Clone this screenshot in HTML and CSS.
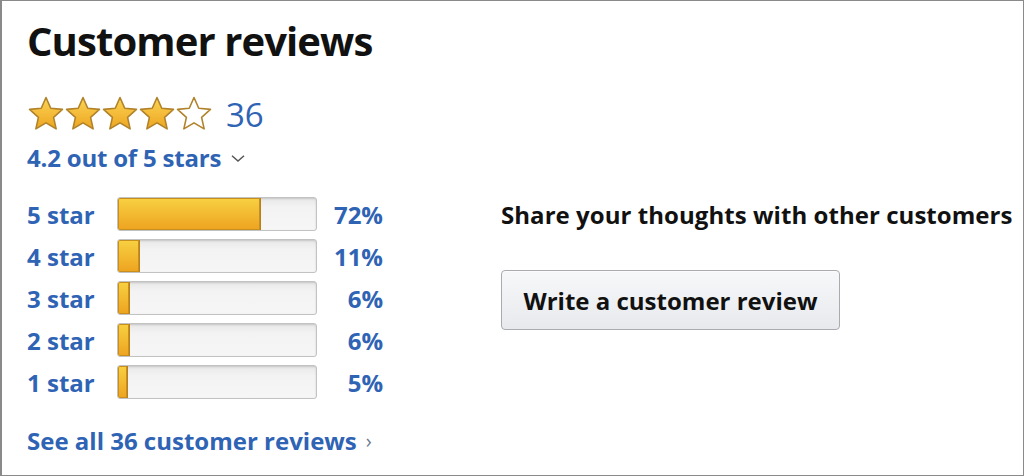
FILE: index.html
```html
<!DOCTYPE html>
<html>
<head>
<meta charset="utf-8">
<link rel="stylesheet" href="styles.css">
</head>
<body>
<div class="frame">
  <div class="left">
    <h1 class="title">Customer reviews</h1>
    <div class="stars-row">
      <div class="stars">
        <svg class="star" viewBox="0 0 24 24"><defs><linearGradient id="g" x1="0" y1="0" x2="0" y2="1"><stop offset="0" stop-color="#fbd454"/><stop offset="1" stop-color="#eda521"/></linearGradient></defs><polygon points="12,1.6 15,8.4 22.4,9.1 16.8,14.1 18.4,21.4 12,17.6 5.6,21.4 7.2,14.1 1.6,9.1 9,8.4" fill="url(#g)" stroke="#b0822a" stroke-width="1" stroke-linejoin="round"/></svg>
        <svg class="star" viewBox="0 0 24 24"><polygon points="12,1.6 15,8.4 22.4,9.1 16.8,14.1 18.4,21.4 12,17.6 5.6,21.4 7.2,14.1 1.6,9.1 9,8.4" fill="url(#g)" stroke="#b0822a" stroke-width="1" stroke-linejoin="round"/></svg>
        <svg class="star" viewBox="0 0 24 24"><polygon points="12,1.6 15,8.4 22.4,9.1 16.8,14.1 18.4,21.4 12,17.6 5.6,21.4 7.2,14.1 1.6,9.1 9,8.4" fill="url(#g)" stroke="#b0822a" stroke-width="1" stroke-linejoin="round"/></svg>
        <svg class="star" viewBox="0 0 24 24"><polygon points="12,1.6 15,8.4 22.4,9.1 16.8,14.1 18.4,21.4 12,17.6 5.6,21.4 7.2,14.1 1.6,9.1 9,8.4" fill="url(#g)" stroke="#b0822a" stroke-width="1" stroke-linejoin="round"/></svg>
        <svg class="star" viewBox="0 0 24 24"><polygon points="12,1.6 15,8.4 22.4,9.1 16.8,14.1 18.4,21.4 12,17.6 5.6,21.4 7.2,14.1 1.6,9.1 9,8.4" fill="#fff" stroke="#b0822a" stroke-width="1" stroke-linejoin="round"/></svg>
      </div>
      <span class="count">36</span>
    </div>
    <div class="avg">4.2 out of 5 stars <svg class="chev" viewBox="0 0 14 7"><polyline points="1,0.8 7,6 13,0.8" fill="none" stroke="#555" stroke-width="1.5"/></svg></div>
    <div class="hist">
      <div class="row"><span class="lbl">5 star</span><div class="bar"><div class="fill" style="width:72%"></div></div><span class="pct">72%</span></div>
      <div class="row"><span class="lbl">4 star</span><div class="bar"><div class="fill" style="width:11%"></div></div><span class="pct">11%</span></div>
      <div class="row"><span class="lbl">3 star</span><div class="bar"><div class="fill" style="width:6%"></div></div><span class="pct">6%</span></div>
      <div class="row"><span class="lbl">2 star</span><div class="bar"><div class="fill" style="width:6%"></div></div><span class="pct">6%</span></div>
      <div class="row"><span class="lbl">1 star</span><div class="bar"><div class="fill" style="width:5%"></div></div><span class="pct">5%</span></div>
    </div>
    <div class="seeall">See all 36 customer reviews <span class="arrow">›</span></div>
  </div>
  <div class="right">
    <div class="share">Share your thoughts with other customers</div>
    <button class="btn">Write a customer review</button>
  </div>
</div>
</body>
</html>
```
FILE: styles.css
```css
html, body {
  margin: 0;
  padding: 0;
  background: #fff;
}
.frame {
  width: 1024px;
  height: 476px;
  box-sizing: border-box;
  border-style: solid;
  border-color: #8a8a8a;
  border-width: 1px 1px 1px 2px;
  display: flex;
  font-family: "Open Sans", "Liberation Sans", sans-serif;
  font-weight: 700;
  padding-left: 25px;
}
.left {
  width: 474px;
}
.title {
  margin: 16px 0 0 0;
  font-size: 40px;
  line-height: 48px;
  color: #111;
  font-weight: 700;
  letter-spacing: -0.9px;
}
.stars-row {
  display: flex;
  align-items: center;
  margin-top: 29px;
  height: 40px;
}
.stars {
  display: flex;
}
.star {
  width: 38px;
  height: 38px;
  margin-right: -1px;
}
.count {
  font-size: 33px;
  font-weight: 400;
  color: #2f63b4;
  margin-left: 14px;
}
.avg {
  margin-top: 5px;
  font-size: 24px;
  color: #2f63b4;
  display: flex;
  align-items: center;
  height: 36px;
  letter-spacing: -0.2px;
}
.chev {
  width: 14px;
  height: 7px;
  margin-left: 10px;
  margin-top: 3px;
}
.hist {
  margin-top: 22px;
  display: flex;
  flex-direction: column;
  gap: 8px;
}
.row {
  display: flex;
  align-items: center;
  height: 34px;
  color: #2f63b4;
  font-size: 24px;
}
.lbl {
  width: 90px;
}
.bar {
  width: 198px;
  height: 32px;
  border: 1px solid #c2c2c2;
  border-radius: 3px;
  background: linear-gradient(#e8e8e8, #f3f3f3 30%, #f6f6f6);
  box-shadow: inset 0 1px 2px rgba(0,0,0,0.15);
  overflow: hidden;
  display: flex;
}
.fill {
  height: 100%;
  box-sizing: border-box;
  background: linear-gradient(#f7d142, #eea320);
  border-right: 1px solid #b8801a;
  border-radius: 2px 0 0 2px;
  box-shadow: inset 0 0 0 1px #c98f1c;
}
.pct {
  width: 66px;
  text-align: right;
}
.seeall {
  margin-top: 25px;
  font-size: 24px;
  color: #2f63b4;
  display: flex;
  align-items: center;
}
.arrow {
  font-size: 20px;
  margin-left: 9px;
  color: #6a7b94;
  font-weight: 400;
}
.right {
  padding-top: 197px;
}
.share {
  font-size: 24px;
  color: #111;
  letter-spacing: 0.05px;
}
.btn {
  margin-top: 39px;
  width: 339px;
  height: 60px;
  border: 1px solid #a9abb0;
  border-radius: 4px;
  background: linear-gradient(#f7f8fa, #e7e9ec);
  font-family: "Open Sans", "Liberation Sans", sans-serif;
  font-weight: 700;
  font-size: 24px;
  color: #111;
  box-shadow: 0 1px 0 rgba(255,255,255,0.6) inset;
  padding: 0;
}
```
